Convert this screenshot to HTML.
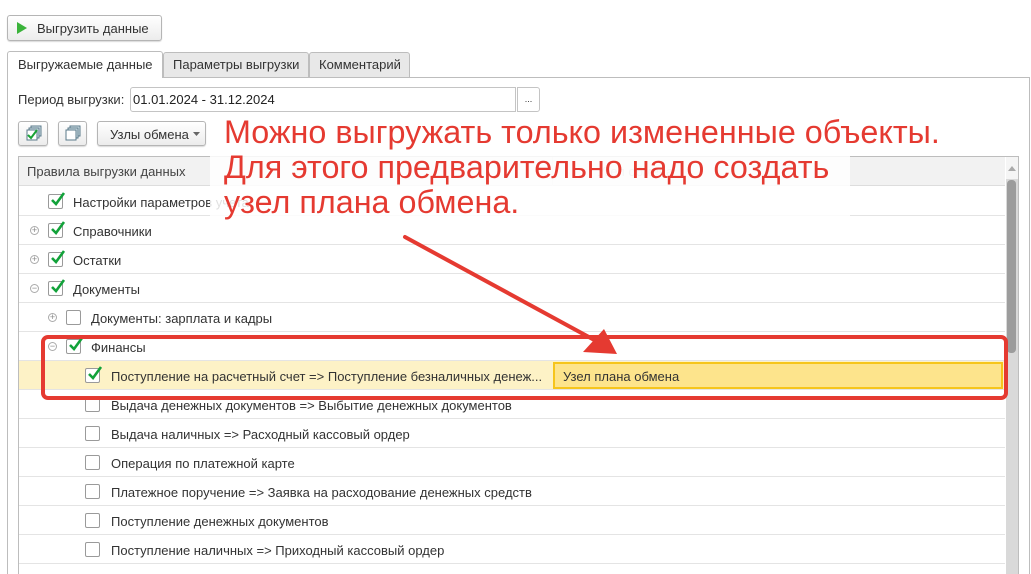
<!DOCTYPE html>
<html><head><meta charset="utf-8"><style>
*{box-sizing:border-box;margin:0;padding:0}
body{width:1031px;height:574px;background:#fff;position:relative;overflow:hidden;font-family:"Liberation Sans",Arial,sans-serif;font-size:13px;color:#333}
.a{position:absolute}
.btn{position:absolute;border:1px solid #b5b5b5;border-radius:3px;background:linear-gradient(#fff,#ececec);box-shadow:0 1px 1px rgba(0,0,0,.15)}
.row{position:absolute;left:19px;width:986px;height:29px;border-bottom:1px solid #e4e4e4}
.cb{position:absolute;width:15px;height:15px;border:1px solid #9a9a9a;border-radius:2px;background:#fff}
.cb svg{position:absolute;left:1px;top:-4px}
.exp{position:absolute;width:9px;height:9px;border:1px solid #aaa;border-radius:50%;font-size:9px;line-height:7px;text-align:center;color:#888}
.t{position:absolute;white-space:nowrap;font-size:13px;line-height:15px}
</style></head><body>
<div class="btn" style="left:7px;top:15px;width:155px;height:26px"></div>
<svg class="a" style="left:16px;top:22px" width="12" height="12"><polygon points="1,0 11,6 1,12" fill="#3bb33b"/></svg>
<div class="t" style="left:37px;top:21px">Выгрузить данные</div>

<div class="a" style="left:7px;top:77px;width:1023px;height:497px;border:1px solid #bdbdbd;border-bottom:none"></div>
<div class="a" style="left:7px;top:51px;width:156px;height:27px;border:1px solid #bdbdbd;border-bottom:none;background:#fff;border-radius:3px 3px 0 0"></div>
<div class="t" style="left:18px;top:57px">Выгружаемые данные</div>
<div class="a" style="left:163px;top:52px;width:146px;height:26px;border:1px solid #bdbdbd;background:#e8e8e8;border-radius:3px 3px 0 0"></div>
<div class="t" style="left:173px;top:57px">Параметры выгрузки</div>
<div class="a" style="left:309px;top:52px;width:101px;height:26px;border:1px solid #bdbdbd;background:#e8e8e8;border-radius:3px 3px 0 0"></div>
<div class="t" style="left:319px;top:57px">Комментарий</div>
<div class="a" style="left:163px;top:77px;width:867px;height:1px;background:#bdbdbd"></div>

<div class="t" style="left:18px;top:92px">Период выгрузки:</div>
<div class="a" style="left:130px;top:87px;width:386px;height:25px;border:1px solid #c4c4c4;border-radius:3px 0 0 3px"></div>
<div class="t" style="left:133px;top:92px;color:#222">01.01.2024 - 31.12.2024</div>
<div class="a" style="left:517px;top:87px;width:23px;height:25px;border:1px solid #c4c4c4;border-radius:0 3px 3px 0;font-size:9px;text-align:center;line-height:22px">...</div>

<div class="btn" style="left:18px;top:121px;width:30px;height:25px"></div>
<svg class="a" style="left:24px;top:125px" width="20" height="18"><rect x="7" y="1" width="10" height="10" fill="#d6e4ea" stroke="#5a7a8a"/><rect x="5" y="3" width="10" height="10" fill="#d6e4ea" stroke="#5a7a8a"/><rect x="3" y="5" width="10" height="10" fill="#fff" stroke="#5a7a8a"/><path d="M4 10 L7 13 L13 5" stroke="#18a334" stroke-width="2" fill="none"/></svg>
<div class="btn" style="left:58px;top:121px;width:29px;height:25px"></div>
<svg class="a" style="left:63px;top:125px" width="20" height="18"><rect x="7" y="1" width="10" height="10" fill="#d6e4ea" stroke="#5a7a8a"/><rect x="5" y="3" width="10" height="10" fill="#d6e4ea" stroke="#5a7a8a"/><rect x="3" y="5" width="10" height="10" fill="#fff" stroke="#5a7a8a"/></svg>
<div class="btn" style="left:97px;top:121px;width:109px;height:25px"></div>
<div class="t" style="left:110px;top:127px">Узлы обмена</div>
<svg class="a" style="left:193px;top:132px" width="7" height="4"><polygon points="0,0 7,0 3.5,4" fill="#666"/></svg>

<div class="a" style="left:18px;top:156px;width:1001px;height:418px;border:1px solid #bdbdbd;border-bottom:none"></div>
<div class="a" style="left:19px;top:157px;width:986px;height:29px;background:#f2f2f2;border-bottom:1px solid #ddd"></div>
<div class="t" style="left:27px;top:164px;color:#444">Правила выгрузки данных</div>
<div class="a" style="left:552px;top:157px;width:1px;height:29px;background:#e0e0e0"></div>
<div class="t" style="left:597px;top:164px;color:#bbb">Узел обмена</div>
<div class="a" style="left:1006px;top:157px;width:12px;height:417px;background:#d9d9d9"></div>
<div class="a" style="left:1006px;top:157px;width:12px;height:22px;background:#f5f5f5"></div>
<svg class="a" style="left:1008px;top:166px" width="8" height="5"><polygon points="0,5 8,5 4,0" fill="#aaa"/></svg>
<div class="a" style="left:1007px;top:180px;width:9px;height:173px;background:#9c9c9c;border-radius:4px"></div>

<div class="row" style="top:187px"></div>
<div class="row" style="top:216px"></div>
<div class="row" style="top:245px"></div>
<div class="row" style="top:274px"></div>
<div class="row" style="top:303px"></div>
<div class="row" style="top:332px"></div>
<div class="row" style="top:361px;background:#fdf2c6"></div>
<div class="a" style="left:553px;top:362px;width:450px;height:27px;background:#fde48c;border:2px solid #f6c51c"></div>
<div class="row" style="top:390px"></div>
<div class="row" style="top:419px"></div>
<div class="row" style="top:448px"></div>
<div class="row" style="top:477px"></div>
<div class="row" style="top:506px"></div>
<div class="row" style="top:535px"></div>

<div class="cb" style="left:48px;top:194px"><svg width="16" height="16"><path d="M2 9 L6 13 L14 2" stroke="#12a23a" stroke-width="2.6" fill="none"/></svg></div>
<div class="t" style="left:73px;top:195px">Настройки параметров учета</div>

<div class="exp" style="left:30px;top:226px">+</div>
<div class="cb" style="left:48px;top:223px"><svg width="16" height="16"><path d="M2 9 L6 13 L14 2" stroke="#12a23a" stroke-width="2.6" fill="none"/></svg></div>
<div class="t" style="left:73px;top:224px">Справочники</div>

<div class="exp" style="left:30px;top:255px">+</div>
<div class="cb" style="left:48px;top:252px"><svg width="16" height="16"><path d="M2 9 L6 13 L14 2" stroke="#12a23a" stroke-width="2.6" fill="none"/></svg></div>
<div class="t" style="left:73px;top:253px">Остатки</div>

<div class="exp" style="left:30px;top:284px">−</div>
<div class="cb" style="left:48px;top:281px"><svg width="16" height="16"><path d="M2 9 L6 13 L14 2" stroke="#12a23a" stroke-width="2.6" fill="none"/></svg></div>
<div class="t" style="left:73px;top:282px">Документы</div>

<div class="exp" style="left:48px;top:313px">+</div>
<div class="cb" style="left:66px;top:310px"></div>
<div class="t" style="left:91px;top:311px">Документы: зарплата и кадры</div>

<div class="exp" style="left:48px;top:342px">−</div>
<div class="cb" style="left:66px;top:339px"><svg width="16" height="16"><path d="M2 9 L6 13 L14 2" stroke="#12a23a" stroke-width="2.6" fill="none"/></svg></div>
<div class="t" style="left:91px;top:340px">Финансы</div>

<div class="cb" style="left:85px;top:368px"><svg width="16" height="16"><path d="M2 9 L6 13 L14 2" stroke="#12a23a" stroke-width="2.6" fill="none"/></svg></div>
<div class="t" style="left:111px;top:369px">Поступление на расчетный счет =&gt; Поступление безналичных денеж...</div>
<div class="t" style="left:563px;top:369px">Узел плана обмена</div>

<div class="cb" style="left:85px;top:397px"></div>
<div class="t" style="left:111px;top:398px">Выдача денежных документов =&gt; Выбытие денежных документов</div>
<div class="cb" style="left:85px;top:426px"></div>
<div class="t" style="left:111px;top:427px">Выдача наличных =&gt; Расходный кассовый ордер</div>
<div class="cb" style="left:85px;top:455px"></div>
<div class="t" style="left:111px;top:456px">Операция по платежной карте</div>
<div class="cb" style="left:85px;top:484px"></div>
<div class="t" style="left:111px;top:485px">Платежное поручение =&gt; Заявка на расходование денежных средств</div>
<div class="cb" style="left:85px;top:513px"></div>
<div class="t" style="left:111px;top:514px">Поступление денежных документов</div>
<div class="cb" style="left:85px;top:542px"></div>
<div class="t" style="left:111px;top:543px">Поступление наличных =&gt; Приходный кассовый ордер</div>

<div class="a" style="left:210px;top:112px;width:640px;height:116px;background:rgba(255,255,255,.85)"></div>
<div class="a" style="left:224px;top:115px;color:#e53a31;font-size:32px;line-height:35px;white-space:nowrap;font-family:'Liberation Sans',Arial,sans-serif;transform:scaleX(1.01);transform-origin:left top">Можно выгружать только измененные объекты.<br>Для этого предварительно надо создать<br>узел плана обмена.</div>
<div class="a" style="left:41px;top:335px;width:967px;height:65px;border:4px solid #e53a31;border-radius:7px"></div>
<svg class="a" style="left:0;top:0" width="1031" height="574"><line x1="405" y1="237" x2="598" y2="342" stroke="#e53a31" stroke-width="4" stroke-linecap="round"/><polygon points="617,354 583,352 604,329" fill="#e53a31"/></svg>
</body></html>
